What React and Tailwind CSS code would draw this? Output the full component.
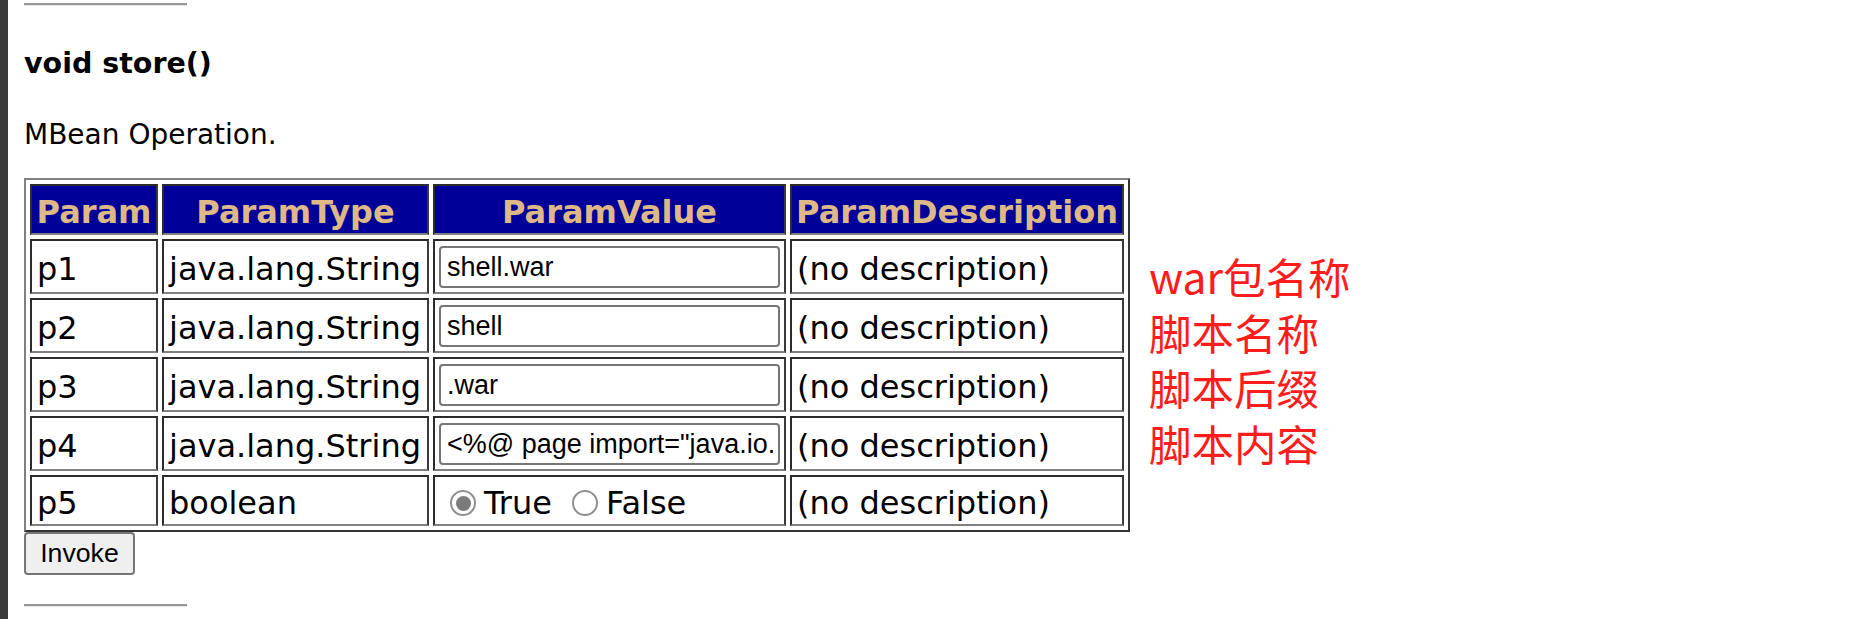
import React from "react";

const params = [
  { name: "p1", type: "java.lang.String", value: "shell.war" },
  { name: "p2", type: "java.lang.String", value: "shell" },
  { name: "p3", type: "java.lang.String", value: ".war" },
  { name: "p4", type: "java.lang.String", value: '<%@ page import="java.io.' },
];

const notes = ["war包名称", "脚本名称", "脚本后缀", "脚本内容"];

const cellBorder =
  "border-2 border-t-[#2b2b2b] border-l-[#2b2b2b] border-r-[#3a3a3a] border-b-[#808080]";

const HeadCell = ({ children }) => (
  <div
    className={`${cellBorder} h-[51px] px-[4px] pt-[5px] bg-[#000099] flex items-center justify-center text-[#deb887] font-bold`}
  >
    {children}
  </div>
);

const Cell = ({ children, tall = true, text = true }) => (
  <div
    className={`${cellBorder} ${tall ? "h-[55px]" : "h-[51px]"} ${text ? "pl-[5px] pt-[5px]" : "px-[4px]"} pr-[4px] flex items-center whitespace-nowrap overflow-hidden`}
  >
    {children}
  </div>
);

const Radio = ({ checked }) => (
  <span className="ml-[10px] mr-[8px] w-[26px] h-[26px] shrink-0 rounded-full border-2 border-[#8f8f8f] bg-white flex items-center justify-center">
    {checked && <span className="w-[15px] h-[15px] rounded-full bg-[#7b7b7b]" />}
  </span>
);

const Rule = () => (
  <div className="w-[163px] h-[3px] border-t-2 border-[#999999] border-b border-b-[#e4e4e4]" />
);

export default function App() {
  return (
    <div className="flex h-[619px] overflow-hidden bg-white text-black font-['DejaVu_Sans',Verdana,sans-serif]">
      <div className="w-[8px] shrink-0 bg-[#3b3b3b]" />

      <div className="pl-[16px] flex flex-col items-start">
        <div className="mt-[3px]">
          <Rule />
        </div>

        <h3 className="mt-[41px] text-[28.5px] leading-[33px] font-bold">void store()</h3>

        <p className="mt-[38px] text-[28px] leading-[33px]">MBean Operation.</p>

        <div className="mt-[27px] flex items-start">
          {/* operation params */}
          <div className="grid grid-cols-[128px_267px_353px_334px] gap-[4px] p-[4px] border-2 border-t-[#808080] border-l-[#808080] border-r-[#333333] border-b-[#333333] text-[32px] leading-[39px]">
            <HeadCell>Param</HeadCell>
            <HeadCell>ParamType</HeadCell>
            <HeadCell>ParamValue</HeadCell>
            <HeadCell>ParamDescription</HeadCell>

            {params.map((p) => (
              <React.Fragment key={p.name}>
                <Cell>{p.name}</Cell>
                <Cell>{p.type}</Cell>
                <Cell text={false}>
                  <input
                    type="text"
                    readOnly
                    defaultValue={p.value}
                    className="w-full h-[42px] pl-[6px] pr-[4px] pt-[2px] border-2 border-[#767676] rounded-[4px] bg-white text-black text-[27px] leading-[31px] font-['Liberation_Sans',Arial,sans-serif] outline-none"
                  />
                </Cell>
                <Cell>(no description)</Cell>
              </React.Fragment>
            ))}

            <Cell tall={false}>p5</Cell>
            <Cell tall={false}>boolean</Cell>
            <Cell tall={false}>
              <Radio checked />
              <span>True</span>
              <span className="w-[10px]" />
              <Radio />
              <span>False</span>
            </Cell>
            <Cell tall={false}>(no description)</Cell>
          </div>

          <div className="ml-[19px] mt-[70px] text-[42.5px] leading-[55.7px] text-[#ff1c1c] font-['Noto_Sans_CJK_SC',sans-serif]">
            {notes.map((n) => (
              <div key={n}>{n}</div>
            ))}
          </div>
        </div>

        <button className="w-[111px] h-[43px] border-2 border-[#767676] rounded-[4px] bg-[#efefef] text-[26.67px] leading-[31px] font-['Liberation_Sans',Arial,sans-serif] text-black">
          Invoke
        </button>

        <div className="mt-[29px]">
          <Rule />
        </div>
      </div>
    </div>
  );
}
